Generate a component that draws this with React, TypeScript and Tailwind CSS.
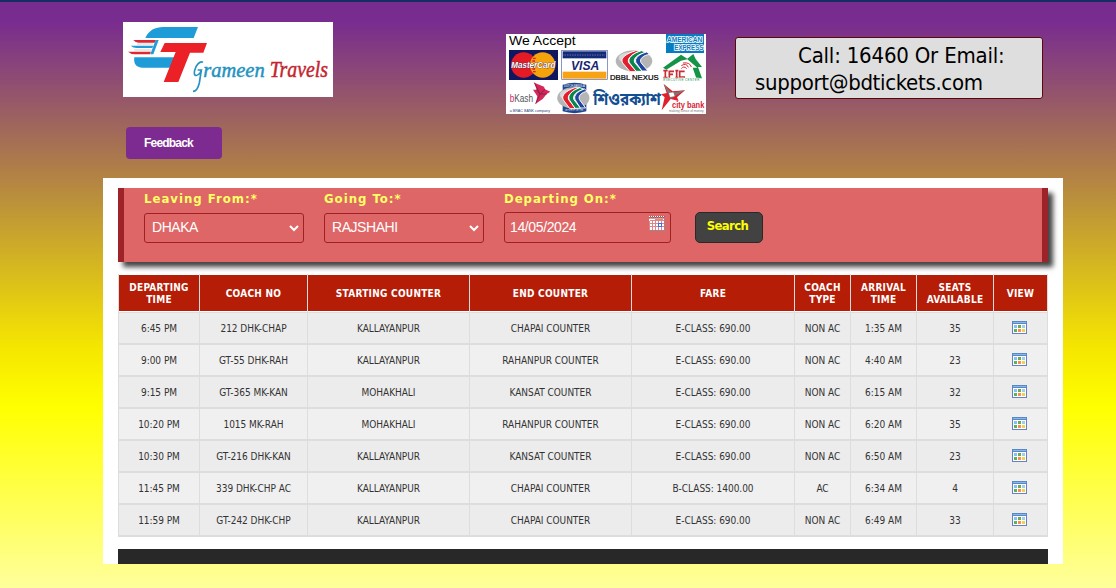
import React from "react";

const sans = "font-['DejaVu_Sans_Condensed','DejaVu_Sans',sans-serif] [font-stretch:condensed]";

const rows = [
  ["6:45 PM", "212 DHK-CHAP", "KALLAYANPUR", "CHAPAI COUNTER", "E-CLASS: 690.00", "NON AC", "1:35 AM", "35"],
  ["9:00 PM", "GT-55 DHK-RAH", "KALLAYANPUR", "RAHANPUR COUNTER", "E-CLASS: 690.00", "NON AC", "4:40 AM", "23"],
  ["9:15 PM", "GT-365 MK-KAN", "MOHAKHALI", "KANSAT COUNTER", "E-CLASS: 690.00", "NON AC", "6:15 AM", "32"],
  ["10:20 PM", "1015 MK-RAH", "MOHAKHALI", "RAHANPUR COUNTER", "E-CLASS: 690.00", "NON AC", "6:20 AM", "35"],
  ["10:30 PM", "GT-216 DHK-KAN", "KALLAYANPUR", "KANSAT COUNTER", "E-CLASS: 690.00", "NON AC", "6:50 AM", "23"],
  ["11:45 PM", "339 DHK-CHP AC", "KALLAYANPUR", "CHAPAI COUNTER", "B-CLASS: 1400.00", "AC", "6:34 AM", "4"],
  ["11:59 PM", "GT-242 DHK-CHP", "KALLAYANPUR", "CHAPAI COUNTER", "E-CLASS: 690.00", "NON AC", "6:49 AM", "33"],
];

const heads = ["DEPARTING TIME", "COACH NO", "STARTING COUNTER", "END COUNTER", "FARE", "COACH TYPE", "ARRIVAL TIME", "SEATS AVAILABLE", "VIEW"];
const columns = "grid grid-cols-[81px_108px_162px_162px_163px_56px_66px_77px_54px]";

function Logo() {
  return (
    <svg className="block h-[75px] w-[210px] overflow-visible bg-white" viewBox="39 36 630 225">
      <path d="M106 84C116 61 135 51 160 51H264L251 84Z" fill="#1e9cd7" />
      <path d="M73 142H194L183 173H98C78 173 70 160 73 142Z" fill="#1e9cd7" />
      <path d="M164 99H291L280 128H240L205 216H161L197 126H151Z" fill="#ec2027" />
      <path d="M70 90Q76 98 86 98H134L138 90Z" fill="#dc2932" />
      <path d="M62 107Q70 114 80 114H127L130 107Z" fill="#239bd5" />
      <path d="M54 125Q62 133 76 133H120L123 125H72Z" fill="#dc2932" />
      <path d="M81 102H130M73 120H124" stroke="#bbb" strokeWidth="2" />
      <path d="M137 90H146L130 133H121Z" fill="#239bd5" />
      <g fontFamily="Liberation Serif, serif" fontStyle="italic" fontSize="62" strokeWidth="1.4">
        <path d="M279 157C270 152 258 165 254 181C249 200 262 201 271 187L274 180H263M274 180L268 219C264 236 256 244 249 244" fill="none" stroke="#2492bf" strokeWidth="5" />
        <text x="280" y="201" textLength="184" lengthAdjust="spacingAndGlyphs" fill="#2492bf" stroke="#2492bf">rameen</text>
        <text x="479" y="201" textLength="175" lengthAdjust="spacingAndGlyphs" fontSize="67" fill="#c5242d" stroke="#c5242d">Travels</text>
      </g>
    </svg>
  );
}

function Nexus() {
  return (
    <g>
      <ellipse cx="0" cy="0" rx="55" ry="32" fill="#b5b5b5" />
      <ellipse cx="-14" cy="-9" rx="32" ry="17" fill="#d8d8d8" />
      <path d="M5 -31C-24-22-43-8-34 6L-12 32H8L-16 5C-22-8-5-22 23-31Z" fill="#e31f2d" stroke="white" strokeWidth="3" />
      <path d="M22 -31C-6-22-20-8-14 5L6 31H25L2 5C-4-8 13-22 38-26Z" fill="#098650" stroke="white" strokeWidth="3" />
      <path d="M38 -27C14-20 0-8 6 5L24 30H42L21 5C15-7 29-18 48-20Z" fill="#20459c" stroke="white" strokeWidth="3" />
    </g>
  );
}

function Payments() {
  return (
    <svg className="block h-20 w-[200px] overflow-visible bg-white" viewBox="18 18 600 240">
      <g fontFamily="Liberation Sans, sans-serif">
        <text x="27" y="52" fontSize="40" textLength="200" lengthAdjust="spacingAndGlyphs">We Accept</text>
        <rect x="498" y="18" width="114" height="57" fill="#087cc0" />
        <g fill="#087cc0" stroke="white" strokeWidth="5" paintOrder="stroke" fontSize="21" fontWeight="bold">
          <text x="501" y="41" textLength="106" lengthAdjust="spacingAndGlyphs">AMERICAN</text>
          <text x="523" y="66" textLength="87" lengthAdjust="spacingAndGlyphs">EXPRESS</text>
        </g>
        <rect x="27" y="66" width="147" height="90" fill="#101761" />
        <circle cx="71" cy="111" r="38" fill="#e41b25" />
        <circle cx="128" cy="111" r="38" fill="#f5a20b" />
        <path d="M99 91H107M97 99H105M95 107H103M95 115H103M97 123H105M99 131H107" stroke="#e41b25" strokeWidth="4" />
        <text x="34" y="120" textLength="132" lengthAdjust="spacingAndGlyphs" fontSize="27" fontWeight="bold" fontStyle="italic" fill="white" stroke="#40234a" strokeWidth="2" paintOrder="stroke">MasterCard</text>
        <rect x="185" y="67" width="137" height="87" fill="white" stroke="#5363a4" strokeWidth="2" />
        <rect x="188" y="70" width="131" height="21" fill="#132a78" />
        <path d="M191 81H316" stroke="#6670a6" strokeWidth="5" strokeDasharray="2 3" />
        <rect x="188" y="131" width="131" height="21" fill="#f8a313" />
        <text x="213" y="125" textLength="85" lengthAdjust="spacingAndGlyphs" fontSize="38" fontWeight="bold" fontStyle="italic" fill="#17266f">VISA</text>
        <g transform="translate(402 99)"><Nexus /></g>
        <text x="330" y="155" fontSize="22" stroke="black" strokeWidth=".7" textLength="146" lengthAdjust="spacingAndGlyphs">DBBL NEXUS</text>
        <path d="M489 119L543 80L562 92L580 78L587 93L606 117H594L606 151H589L578 119H592L562 94L543 98L499 125Z" fill="#159447" />
        <path d="M490 128H503M490 149H503M496 128V149M508 150V130H522M508 139H519M526 128H535M526 149H535M530 128V149M554 130H539V147H555" fill="none" stroke="#c82e35" strokeWidth="5" />
        <g fill="none" stroke="#dc2932" strokeWidth="3"><path d="M544 122q7-10 16 0M544 113q15-10 21 5M549 105q21-3 25 12" /></g>
        <text x="490" y="158" textLength="108" fontSize="9" fill="#159447" stroke="white" strokeWidth="2" paintOrder="stroke">EXECUTIVE CENTER</text>
        <text x="29" y="221" textLength="70" lengthAdjust="spacingAndGlyphs" fontSize="33" fill="#4d555a"><tspan fill="#d52664">b</tspan>Kash</text>
        <path d="M103 164L132 176L135 184L151 191L140 198L128 213L107 227L112 205L99 185L110 185Z" fill="#d52759" />
        <path d="M103 164L120 198L135 184M120 198L107 227M110 185L120 198L140 198" fill="none" stroke="#8d204b" strokeWidth="3" />
        <text x="29" y="251" textLength="121" fontSize="11" fill="#273e7e">a BRAC BANK company</text>
        <path d="M188 170Q223 159 259 170V250Q223 261 188 250Z" fill="#20468e" />
        <g transform="translate(220 210) scale(.88 1)"><Nexus /></g>
        <text x="192" y="177" textLength="62" lengthAdjust="spacingAndGlyphs" fontSize="11" fill="white">DUTCH-BANGLA</text>
        <text x="196" y="250" textLength="54" lengthAdjust="spacingAndGlyphs" fontSize="9" fill="white">মোবাইল ব্যাংকিং</text>
        <text x="280" y="232" textLength="202" lengthAdjust="spacingAndGlyphs" fontSize="51" fontWeight="bold" fill="#124e91" fontFamily="Noto Sans Bengali, sans-serif">শিওরক্যাশ</text>
        <path d="M491 168L518 190L555 187L531 208L536 219L512 213L485 247L494 208L483 199L500 195Z" fill="#df202d" />
        <path d="M491 168L515 194L555 187L525 204L512 213Z" fill="#777" />
        <path d="M507 195L520 193L524 205L510 207Z" fill="white" />
        <text x="516" y="240" textLength="97" lengthAdjust="spacingAndGlyphs" fontSize="29" fontWeight="bold" fill="#d9222f">city bank</text>
        <text x="507" y="251" textLength="104" lengthAdjust="spacingAndGlyphs" fontSize="9" fill="#777">making sense of money</text>
      </g>
    </svg>
  );
}

function ViewIcon() {
  return (
    <svg className="h-[13px] w-[15px]" viewBox="0 0 15 13" shapeRendering="crispEdges">
      <rect x=".5" y=".5" width="14" height="12" fill="white" stroke="#5c86bd" />
      <rect width="15" height="3" fill="#5888c5" /><rect x="1" y="1" width="13" height="1" fill="#8db4e5" />
      <rect x="2" y="4" width="3" height="3" fill="#83bff7" /><rect x="6" y="4" width="3" height="3" fill="#65ad58" /><rect x="10" y="4" width="3" height="3" fill="#9aceff" />
      <rect x="2" y="8" width="3" height="3" fill="#65ad58" /><rect x="6" y="8" width="3" height="3" fill="#ff8b45" /><rect x="10" y="8" width="3" height="3" fill="#f6cf52" />
    </svg>
  );
}

function DateIcon() {
  return (
    <svg className="h-4 w-4" viewBox="0 0 16 16" shapeRendering="crispEdges">
      <rect y="2" width="15" height="12" fill="#fff" />
      <path d="M0 .5H16" stroke="white" strokeDasharray="1 1" />
      <path d="M1 .5H16M0 1.5H16" stroke="#8b6262" strokeDasharray="1 1" />
      <path d="M0 2.5H15" stroke="#d9a0a0" />
      <path d="M6 3.5H14M1 4.5H15M0 7.5H15M0 10.5H15M.5 5V14M3.5 5V14M6.5 5V14M9.5 5V14M12.5 5V14" stroke="#df8587" />
      <path d="M0 14.5H15.5V3" fill="none" stroke="#b27d7d" />
      <rect x="9.5" y="7.5" width="3" height="3" fill="white" stroke="#3b70e8" />
    </svg>
  );
}

function SelectField({ label, value }: { label: string; value: string }) {
  return (
    <label className="flex w-40 flex-col">
      <span className="h-[25px] whitespace-nowrap font-['DejaVu_Sans',sans-serif] text-[13px] font-bold leading-[21px] tracking-[1.02px] text-[#ffff66]">{label}</span>
      <span className="flex h-[30px] items-center justify-between rounded-[3px] border border-[#a02024] pb-0.5 pl-[7px] pr-1 font-['Liberation_Sans',sans-serif] text-sm tracking-[-.45px] text-white">
        {value}
        <svg className="mt-[3px] h-[7px] w-[10px]" viewBox="0 0 10 7"><path d="M1 1L5 5L9 1" fill="none" stroke="white" strokeWidth="2" /></svg>
      </span>
    </label>
  );
}

export default function App() {
  return (
    <div className={`h-[588px] w-[1116px] overflow-hidden border-t-2 border-[#172c60] bg-[linear-gradient(#792c8f_0px,#792c8f_20px,#b08046_170px,#f5e600_345px,#ffff00_405px,#ffff9c_586px)] ${sans}`}>
      <div className="mx-auto w-[960px] translate-x-[25px]">
        <header className="flex h-[176px] items-start pl-5 pt-5">
          <div className="flex w-[210px] flex-col">
            <Logo />
            <button className="ml-[3px] mt-[30px] h-8 w-24 rounded-sm bg-[#7d2b90] pl-[18px] text-left font-['Liberation_Sans',sans-serif] text-xs font-bold tracking-[-.9px] text-white"><span className="tracking-[-.8px]">Feedback</span></button>
          </div>
          <div className="ml-[173px] mt-3"><Payments /></div>
          <div className="ml-[29px] mt-[15px] h-[62px] w-[308px] rounded-[3px] border border-[#5a0909] bg-[#dedede] pl-[19px] pt-1 text-[22px] leading-[27px] text-black">
            <div className="whitespace-nowrap pl-[43px] tracking-[-.2px]">Call: 16460 Or Email:</div>
            <div className="whitespace-nowrap tracking-[-.33px]">support@bdtickets.com</div>
          </div>
        </header>
        <main className="h-[386px] bg-white px-[15px] pt-[10px]">
          <form className="flex h-[74px] gap-5 border-x-[6px] border-[#9d2328] bg-[#df6666] pl-5 shadow-[5px_5px_5px_#444]">
            <SelectField label="Leaving From:*" value="DHAKA" />
            <SelectField label="Going To:*" value="RAJSHAHI" />
            <label className="flex w-[167px] flex-col">
              <span className="h-6 whitespace-nowrap font-['DejaVu_Sans',sans-serif] text-[13px] font-bold leading-[21px] tracking-[.98px] text-[#ffff66]">Departing On:*</span>
              <span className="flex h-[31px] justify-between rounded-[3px] border border-[#a02024] pl-[5px] pr-[5px] pt-[3px] font-['Liberation_Sans',sans-serif] text-sm leading-[23px] tracking-[-.38px] text-white">14/05/2024<DateIcon /></span>
            </label>
            <button type="button" className="ml-1 mt-6 h-[31px] w-[68px] rounded-[5px] border border-[#292929] bg-[#424242] pb-[3px] pr-[3px] text-[13px] font-bold tracking-[-.6px] text-[#ffff00]">Search</button>
          </form>
          <section className="mt-3 h-[263px] border-b border-[#ddd]">
            <div className={`${columns} h-[38px] border-l border-[#ddd]`}>
              {heads.map((head) => (
                <div key={head} className="flex border-r border-[#ddd] pb-px pt-px">
                  <div className="flex h-9 w-full items-center justify-center bg-[#b51d06] pt-0.5 text-center text-[10px] font-bold leading-3 tracking-[.27px] text-white">{head}</div>
                </div>
              ))}
            </div>
            {rows.map((row, i) => (
              <div key={row[0]} className={`${columns} h-8 border-y border-l border-[#ddd] ${i % 2 ? "bg-[#f0f0f0]" : "bg-[#ececec]"}`}>
                {row.map((cell, j) => <div key={j} className="flex items-center justify-center whitespace-nowrap border-r border-[#ddd] pt-px text-[10px] tracking-[-.03px] text-[#333]">{cell}</div>)}
                <div className="flex items-center justify-center border-r border-[#ddd] pb-0.5 pr-[3px]"><ViewIcon /></div>
              </div>
            ))}
          </section>
          <div className="mt-3 h-[15px] bg-[#282828]" />
        </main>
      </div>
    </div>
  );
}
